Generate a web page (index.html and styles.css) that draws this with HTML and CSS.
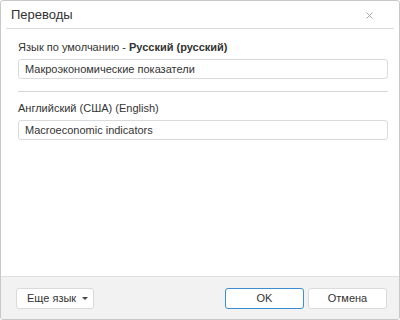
FILE: index.html
```html
<!DOCTYPE html>
<html lang="ru">
<head>
    <meta charset="UTF-8">
    <title>Переводы</title>
    <link rel="stylesheet" href="styles.css">
</head>
<body>
    <div class="dialog">
        <div class="dialog-header">
            <span class="dialog-title">Переводы</span>
            <span class="dialog-close">
                <svg width="7" height="7" viewBox="0 0 7 7"><path d="M0.5 0.5 L6.5 6.5 M6.5 0.5 L0.5 6.5" stroke="#a6a6a6" stroke-width="1" fill="none"/></svg>
            </span>
        </div>

        <div class="dialog-body">
            <div class="lang-group">
                <label class="lang-label">Язык по умолчанию - <b>Русский (русский)</b></label>
                <input type="text" class="lang-input" value="Макроэкономические показатели">
            </div>
            <div class="separator"></div>
            <div class="lang-group">
                <label class="lang-label">Английский (США) (English)</label>
                <input type="text" class="lang-input" value="Macroeconomic indicators">
            </div>
        </div>

        <div class="dialog-footer">
            <button class="btn btn-dropdown">Еще язык <span class="caret"></span></button>
            <div class="footer-right">
                <button class="btn btn-primary">OK</button>
                <button class="btn">Отмена</button>
            </div>
        </div>
    </div>
</body>
</html>
```

FILE: styles.css
```css
* {
    margin: 0;
    padding: 0;
    box-sizing: border-box;
}

body {
    font-family: "Liberation Sans", Arial, sans-serif;
    font-size: 11px;
    color: #333;
    background: #fff;
    width: 400px;
    height: 320px;
}

.dialog {
    width: 400px;
    height: 320px;
    border: 1px solid #c8c8c8;
    border-radius: 3px;
    display: flex;
    flex-direction: column;
    overflow: hidden;
}

.dialog-header {
    height: 28px;
    margin: 0 5px;
    padding: 0 5px;
    border-bottom: 1px solid #dcdcdc;
    display: flex;
    align-items: center;
    justify-content: space-between;
}

.dialog-title {
    font-size: 13px;
    color: #333;
}

.dialog-close {
    display: flex;
    margin-right: 16px;
    margin-top: 2px;
}

.dialog-body {
    flex: 1;
    padding: 11px 11px 0 17px;
}

.lang-label {
    display: block;
    line-height: 14px;
    margin-bottom: 5px;
}

.lang-label b {
    font-weight: bold;
}

.lang-input {
    display: block;
    width: 100%;
    height: 20px;
    padding: 0 6px;
    border: 1px solid #dadada;
    border-radius: 3px;
    font-family: inherit;
    font-size: 11px;
    color: #333;
    outline: none;
}

.separator {
    height: 1px;
    background: #d6d6d6;
    margin: 12px 0 9px;
}

.dialog-footer {
    height: 43px;
    background: #f2f2f2;
    border-top: 1px solid #e0e0e0;
    padding: 0 12px 0 15px;
    display: flex;
    align-items: center;
    justify-content: space-between;
}

.footer-right {
    display: flex;
    gap: 4px;
}

.btn {
    height: 21px;
    min-width: 79px;
    padding: 0 10px;
    background: #fff;
    border: 1px solid #dadada;
    border-radius: 3px;
    font-family: inherit;
    font-size: 11px;
    color: #333;
    cursor: pointer;
}

.btn-dropdown {
    min-width: 77px;
    display: flex;
    align-items: center;
    gap: 6px;
    padding: 0 5px 0 10px;
}

.caret {
    width: 0;
    height: 0;
    border-left: 3px solid transparent;
    border-right: 3px solid transparent;
    border-top: 3px solid #444;
}

.btn-primary {
    border-color: #3c8dd4;
}
```
